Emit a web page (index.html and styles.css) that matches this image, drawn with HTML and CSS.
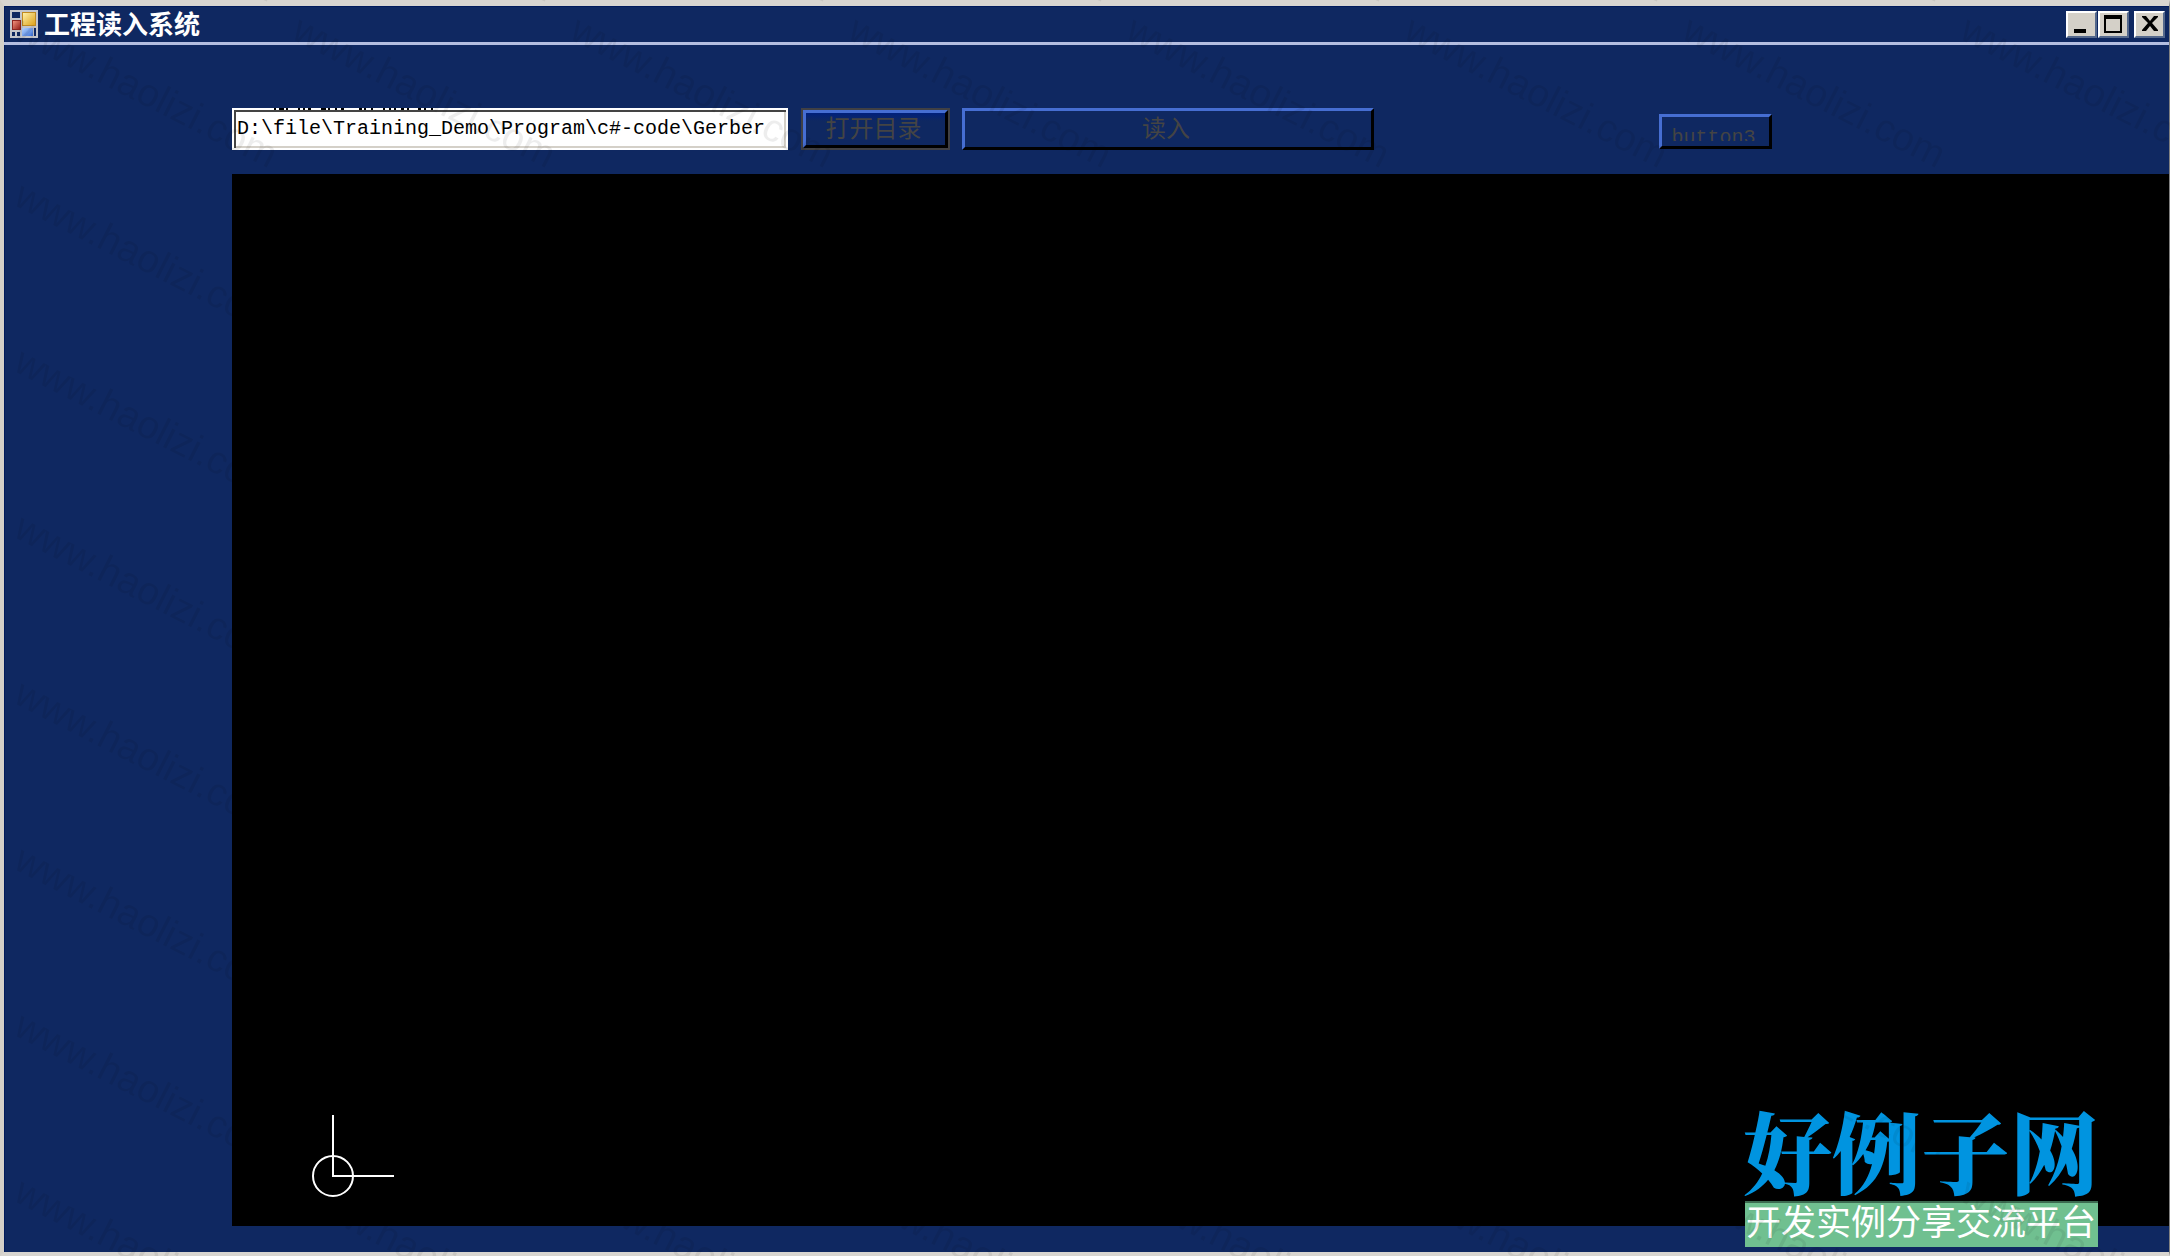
FILE: index.html
```html
<!DOCTYPE html>
<html lang="zh-CN">
<head>
<meta charset="utf-8">
<title>工程读入系统</title>
<link rel="stylesheet" href="styles.css">
</head>
<body>
<div class="window">
  <header class="titlebar">
    <svg class="app-icon" width="28" height="28" viewBox="0 0 28 28" aria-hidden="true">
      <defs>
        <linearGradient id="gold" x1="0" y1="0" x2="1" y2="1"><stop offset="0" stop-color="#fff0a8"/><stop offset="1" stop-color="#dca21c"/></linearGradient>
        <linearGradient id="red" x1="0" y1="0" x2="1" y2="1"><stop offset="0" stop-color="#f0907c"/><stop offset="1" stop-color="#96201a"/></linearGradient>
        <linearGradient id="azure" x1="0" y1="0" x2="1" y2="1"><stop offset="0" stop-color="#b4d4ff"/><stop offset="1" stop-color="#3c70d8"/></linearGradient>
      </defs>
      <rect width="28" height="28" fill="#c4c6cc"/>
      <path d="M2 2h8v6H2zM2 22h3v4H2zM7 22h3v4H7zM24 18h2v8h-2z" fill="#0f2861"/>
      <rect x="2" y="10" width="9" height="10" fill="#8c2420"/>
      <rect x="3" y="11" width="7" height="8" fill="url(#red)"/>
      <rect x="12" y="2" width="14" height="14" fill="#c08a20"/>
      <rect x="13" y="3" width="12" height="12" fill="url(#gold)"/>
      <rect x="12" y="18" width="11" height="8" fill="url(#azure)"/>
    </svg>
    <h1 class="caption">工程读入系统</h1>
    <div class="window-buttons">
      <button class="window-button" type="button" aria-label="最小化">
        <svg width="22" height="20" viewBox="0 0 22 20"><path d="M3 15h12v4H3z"/></svg>
      </button>
      <button class="window-button" type="button" aria-label="最大化">
        <svg width="22" height="20" viewBox="0 0 22 20"><path fill-rule="evenodd" d="M1 1h18v18H1zM3 5v12h14V5z"/></svg>
      </button>
      <button class="window-button window-button-close" type="button" aria-label="关闭">
        <svg width="22" height="20" viewBox="0 0 22 20"><path d="M3 2h4l4 5 4-5h4v1l-6 6 6 7v1h-4l-4-5-4 5H3v-1l6-7-6-6z"/></svg>
      </button>
    </div>
  </header>
  <main class="client">
    <form class="toolbar">
      <div class="path-box">
        <input class="path-input" type="text" aria-label="目录" spellcheck="false" value="D:\file\Training_Demo\Program\c#-code\Gerber">
        <svg class="path-edge" width="166" height="2" viewBox="0 0 166 2" aria-hidden="true"><path d="M0 1h2m3 0h5m2 0h2m10 0h2m3 0h2m3 0h3m10 0h5m2 0h2m5 0h2m4 0h3m15 0h3m2 0h2m5 0h2m10 0h2m4 0h2m3 0h2m5 0h3m3 0h2m9 0h3m3 0h2m5 0h2" stroke="#000" stroke-width="2"/></svg>
      </div>
      <button class="button button-open" type="button">打开目录</button>
      <button class="button button-read" type="button">读入</button>
      <button class="button button-third" type="button"><span class="button-label">button3</span></button>
    </form>
    <section class="viewport">
      <svg width="84" height="84" viewBox="0 0 84 84" fill="none" stroke="#fff" stroke-width="2" aria-hidden="true">
        <circle cx="21" cy="63" r="20"/>
        <path d="M21 2v61h61"/>
      </svg>
    </section>
  </main>
</div>
<div class="site-logo">
  <strong class="site-name">好例子网</strong>
  <span class="site-slogan">开发实例分享交流平台</span>
</div>
<svg class="watermark" width="100%" height="100%" aria-hidden="true">
  <defs>
    <pattern id="mark" x="0" y="10" width="278" height="166" patternUnits="userSpaceOnUse">
      <text class="watermark-text" x="0" y="0" transform="translate(12 28) rotate(27)">www.haolizi.com</text>
    </pattern>
  </defs>
  <rect width="100%" height="100%" fill="url(#mark)"/>
</svg>
</body>
</html>
```
FILE: styles.css
```css
* {
  box-sizing: border-box;
}

body {
  margin: 0;
  position: relative;
  overflow: hidden;
  font-family: "Liberation Sans", "Noto Sans CJK SC", sans-serif;
}

.window {
  display: flex;
  flex-direction: column;
  min-height: 100vh;
  border-style: solid;
  border-width: 6px 1px 4px 4px;
  border-color: #d8d5d0 #808080 #d8d5d0 #d4d0c8;
  background: #0f2861;
  box-shadow: inset 1px 1px 0 #001a5c;
}

.titlebar {
  display: flex;
  align-items: center;
  gap: 6px;
  height: 39px;
  padding: 0 4px 0 6px;
  border-bottom: 3px solid #b4bee0;
}

.caption {
  flex: 1;
  margin: 0;
  padding-top: 2px;
  color: #fff;
  font-size: 26px;
  line-height: 34px;
  font-weight: 700;
}

.window-buttons {
  display: flex;
  gap: 1px;
}

.window-button {
  display: flex;
  align-items: center;
  justify-content: center;
  width: 31px;
  height: 27px;
  padding: 0;
  border: 2px solid;
  border-color: #fff #54688c #54688c #fff;
  background: #d4d0c8;
}

.window-button-close {
  margin-left: 4px;
}

.client {
  flex: 1;
  display: flex;
  flex-direction: column;
  padding: 63px 0 26px 228px;
}

.toolbar {
  display: flex;
  align-items: flex-start;
  margin: 0 0 24px;
}

.path-box {
  position: relative;
  width: 556px;
  margin-right: 13px;
}

.path-input {
  display: block;
  width: 100%;
  height: 42px;
  padding: 0 3px 2px;
  border: 2px solid #fff;
  outline: 0;
  background: #fff;
  box-shadow: inset 2px 2px 0 #444, inset -2px -2px 0 #d4d0c8;
  color: #000;
  font-family: "Liberation Mono", monospace;
  font-size: 20px;
}

.path-edge {
  position: absolute;
  top: 0;
  left: 42px;
}

.button {
  height: 42px;
  padding: 4px 4px 0 0;
  border: 3px solid;
  border-color: #466ed2 #000 #000 #466ed2;
  background: #0f2861;
  color: #444;
  font-family: "Liberation Mono", "Noto Sans CJK SC", monospace;
  font-size: 24px;
  line-height: 32px;
  overflow: hidden;
}

.button-open {
  width: 149px;
  margin-right: 12px;
  outline: 2px solid #404044;
  outline-offset: -2px;
  border-width: 5px;
  background: linear-gradient(#00207c, #0f2861 8px);
  line-height: 28px;
}

.button-read {
  width: 412px;
}

.button-third {
  width: 113px;
  height: 35px;
  margin: 6px 0 0 285px;
  padding: 0 4px 5px 0;
}

.button-label {
  display: block;
  height: 24px;
  font-size: 20px;
  line-height: 41px;
  overflow: hidden;
}

.viewport {
  flex: 1;
  display: flex;
  align-items: flex-end;
  padding: 0 0 29px 80px;
  background: #000;
}

.site-logo {
  position: absolute;
  right: 71px;
  bottom: 9px;
  display: flex;
  flex-direction: column;
  align-items: center;
  gap: 8px;
}

.site-name {
  color: #0094e0;
  font-family: "Noto Serif CJK SC", "Noto Sans CJK SC", serif;
  font-size: 89px;
  line-height: 88px;
  font-weight: 900;
}

.site-slogan {
  width: 353px;
  height: 46px;
  border-top: 2px solid #3c6a50;
  background: #70c090;
  color: #fff;
  font-size: 35px;
  line-height: 40px;
  text-align: center;
  white-space: nowrap;
}

.watermark {
  position: absolute;
  inset: 0;
  pointer-events: none;
}

.watermark-text {
  fill: #000;
  fill-opacity: 0.07;
  font-family: "Liberation Sans", sans-serif;
  font-size: 39px;
}
```
